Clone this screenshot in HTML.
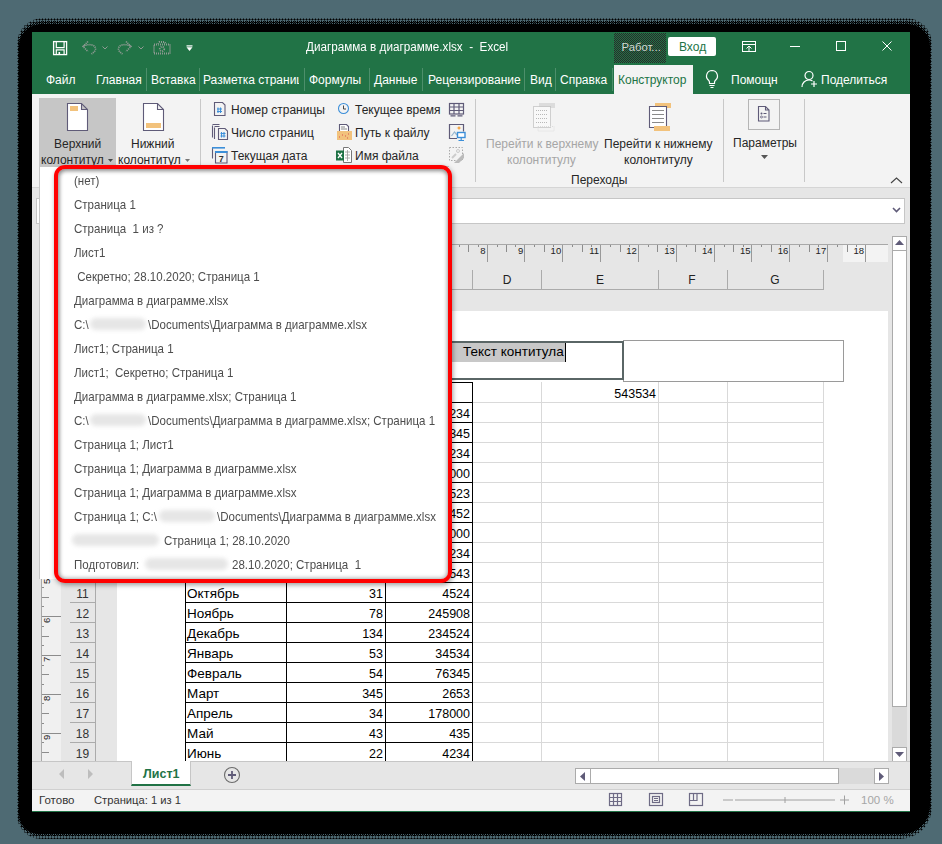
<!DOCTYPE html>
<html><head><meta charset="utf-8">
<style>
*{margin:0;padding:0;box-sizing:border-box}
html,body{width:942px;height:844px;overflow:hidden;background:#4e6a73;font-family:"Liberation Sans",sans-serif;position:relative}
.a{position:absolute}
.t{position:absolute;white-space:pre;line-height:1}
#frame1{left:17px;top:18px;width:915px;height:821px;background:radial-gradient(circle,#000 .9px,transparent 1.1px) 0 0/3px 3px;border-radius:26px 26px 32px 24px}#frame2{left:18px;top:21px;width:913px;height:815px;background:repeating-conic-gradient(#000 0 25%,transparent 0 50%) 0 0/2px 2px;border-radius:24px 24px 30px 22px}#frame{left:19px;top:24px;width:911px;height:810px;background:#000;border-radius:22px 22px 28px 20px}
#win{left:32px;top:32px;width:878px;height:780px;background:#e6e6e6;overflow:hidden}
.tab{position:absolute;top:74px;font-size:12px;color:#fff;white-space:pre;line-height:1}
.sep{position:absolute;top:68px;width:1px;height:23px;background:#4d8f6b}
.rt{position:absolute;font-size:12px;color:#262626;white-space:pre;line-height:1}
.rsep{position:absolute;width:1px;background:#c8c8c8}
</style></head><body>
<div class="a" id="frame1"></div><div class="a" id="frame2"></div><div class="a" id="frame"></div>
<div class="a" id="win"></div>
<!-- TITLE -->
<div class="a" style="left:32px;top:32px;width:878px;height:62px;background:#217346"></div>
<!-- save icon -->
<svg class="a" style="left:52px;top:40px" width="16" height="16" viewBox="0 0 16 16">
 <rect x="1.6" y="1.6" width="13" height="13" stroke="#fff" stroke-width="1.3" fill="none"/>
 <path d="M4.3 1.5V7.6h7.8V1.5" stroke="#fff" stroke-width="1.2" fill="none"/>
 <path d="M4.3 15V9.9h7.8V15" stroke="#fff" stroke-width="1.2" fill="none"/>
 <rect x="6.5" y="12" width="1.6" height="3" fill="#fff"/>
</svg>
<!-- undo/redo disabled -->
<svg class="a" style="left:80px;top:39px" width="120" height="18" viewBox="0 0 120 18">
 <g fill="none" stroke="#8f9a93" stroke-width="1.6" stroke-dasharray="1.2 .8">
  <path d="M8 2.5L3 7.5L8 12.5 M3.5 7 C9 4.5, 15.5 5.5, 15.5 10 C15.5 12, 13.5 13.5, 11.5 15"/>
  <path d="M46 2.5L51 7.5L46 12.5 M50.5 7 C45 4.5, 38.5 5.5, 38.5 10 C38.5 12, 40.5 13.5, 42.5 15"/>
 </g>
 <path d="M22.5 7.5l2.5 2.5 2.5-2.5 M58.5 7.5l2.5 2.5 2.5-2.5" fill="none" stroke="#8f9a93" stroke-width="1"/>
 <g fill="none" stroke="#8f9a93" stroke-width="1.8" stroke-dasharray="1 1">
  <path d="M74 5.5h16v9h-16z M78 5l1.5-2h5l1.5 2"/><circle cx="82" cy="10" r="2.2"/>
 </g>
 <rect x="106.5" y="6.3" width="6" height="1.2" fill="#fff"/>
 <path d="M106.5 8.3h6l-3 3.7z" fill="#fff"/>
</svg>
<div class="t" style="left:306px;top:41px;font-size:12px;color:#fff;transform:scaleX(.975);transform-origin:0 0">Диаграмма в диаграмме.xlsx  -  Excel</div>
<div class="a" style="left:614px;top:33px;width:52px;height:30px;background:repeating-conic-gradient(#2a2a2a 0 25%,#217346 0 50%) 0 0/2px 2px"></div>
<div class="t" style="left:621.5px;top:42px;font-size:11.3px;color:#d0d8d3">Работ...</div>
<div class="a" style="left:668px;top:37px;width:48px;height:19px;background:#fff;border-radius:2px"></div>
<div class="t" style="left:679px;top:41px;font-size:12px;color:#217346">Вход</div>
<!-- window buttons -->
<svg class="a" style="left:740px;top:40px" width="160" height="14" viewBox="0 0 160 14">
 <g fill="none" stroke="#fff" stroke-width="1">
  <rect x="2.5" y="1.5" width="13" height="10"/><path d="M2.5 4.5h13 M9 11V6 M6.5 8.5L9 6l2.5 2.5"/>
  <path d="M50 6.5h10"/>
  <rect x="96.5" y="1.5" width="9" height="9"/>
  <path d="M142.5 1.5l9 9 M151.5 1.5l-9 9"/>
 </g>
</svg>
<!-- TABS -->
<div class="tab" style="left:46px">Файл</div>
<div class="tab" style="left:96px">Главная</div>
<div class="sep" style="left:146px"></div>
<div class="tab" style="left:151px">Вставка</div>
<div class="sep" style="left:199px"></div>
<div class="tab" style="left:203px;width:96px;overflow:hidden">Разметка страниц</div>
<div class="sep" style="left:304px"></div>
<div class="tab" style="left:309px">Формулы</div>
<div class="sep" style="left:369px"></div>
<div class="tab" style="left:374px">Данные</div>
<div class="sep" style="left:422px"></div>
<div class="tab" style="left:428px">Рецензирование</div>
<div class="sep" style="left:524px"></div>
<div class="tab" style="left:530px">Вид</div>
<div class="sep" style="left:555px"></div>
<div class="tab" style="left:560px">Справка</div>
<div class="sep" style="left:612px"></div>
<div class="a" style="left:614px;top:65px;width:79px;height:29px;background:#f3f3f3"></div>
<div class="tab" style="left:618px;color:#217346">Конструктор</div>
<svg class="a" style="left:704px;top:69px" width="16" height="20" viewBox="0 0 16 20">
 <path d="M8 1.5a5.5 5.5 0 0 0-3.5 9.7c.6.6 1 1.3 1 2.3v1h5v-1c0-1 .4-1.7 1-2.3A5.5 5.5 0 0 0 8 1.5z M5.5 16.5h5 M6.5 18.5h3" fill="none" stroke="#fff" stroke-width="1.2"/>
</svg>
<div class="tab" style="left:731px">Помощн</div>
<svg class="a" style="left:801px;top:70px" width="18" height="18" viewBox="0 0 18 18">
 <circle cx="8" cy="5.5" r="4" fill="none" stroke="#fff" stroke-width="1.2"/>
 <path d="M1 17c0-4 3-7 7-7 1.5 0 2.5.4 3.5 1" fill="none" stroke="#fff" stroke-width="1.2"/>
 <path d="M13 11v6 M10 14h6" stroke="#fff" stroke-width="1.2"/>
</svg>
<div class="tab" style="left:821px">Поделиться</div>
<!--RIBBON-->
<div class="a" style="left:32px;top:94px;width:878px;height:94px;background:#f3f3f3;border-bottom:1px solid #d5d5d5"></div>

<!--SHEET-->
<div class="a" style="left:36px;top:198px;width:869px;height:26px;background:#fff;border:1px solid #c6c6c6"></div>
<svg class="a" style="left:892px;top:207px" width="9" height="6"><path d="M1 1l3.5 3.5L8 1" fill="none" stroke="#5f5b78" stroke-width="1.6"/></svg>
<div class="a" style="left:117px;top:244px;width:771px;height:18px;border-top:1px solid #a8a8a8"></div>
<div class="a" style="left:843px;top:245px;width:45px;height:17px;background:#f3f3f3"></div>
<div class="a" style="left:184px;top:245px;width:1px;height:17px;background:#999"></div>
<div class="t" style="left:162.7px;width:20px;text-align:right;top:245.7px;font-size:9.5px;color:#222">0</div>
<div class="a" style="left:165.3px;top:245px;width:1px;height:7px;background:#8c8c8c"></div>
<div class="a" style="left:155.8px;top:245px;width:1px;height:2px;background:#8c8c8c"></div>
<div class="a" style="left:174.7px;top:245px;width:1px;height:2px;background:#8c8c8c"></div>
<div class="a" style="left:222px;top:245px;width:1px;height:17px;background:#999"></div>
<div class="t" style="left:200.6px;width:20px;text-align:right;top:245.7px;font-size:9.5px;color:#222">1</div>
<div class="a" style="left:203.1px;top:245px;width:1px;height:7px;background:#8c8c8c"></div>
<div class="a" style="left:193.7px;top:245px;width:1px;height:2px;background:#8c8c8c"></div>
<div class="a" style="left:212.6px;top:245px;width:1px;height:2px;background:#8c8c8c"></div>
<div class="a" style="left:259px;top:245px;width:1px;height:17px;background:#999"></div>
<div class="t" style="left:238.4px;width:20px;text-align:right;top:245.7px;font-size:9.5px;color:#222">2</div>
<div class="a" style="left:241.0px;top:245px;width:1px;height:7px;background:#8c8c8c"></div>
<div class="a" style="left:231.5px;top:245px;width:1px;height:2px;background:#8c8c8c"></div>
<div class="a" style="left:250.4px;top:245px;width:1px;height:2px;background:#8c8c8c"></div>
<div class="a" style="left:297px;top:245px;width:1px;height:17px;background:#999"></div>
<div class="t" style="left:276.2px;width:20px;text-align:right;top:245.7px;font-size:9.5px;color:#222">3</div>
<div class="a" style="left:278.8px;top:245px;width:1px;height:7px;background:#8c8c8c"></div>
<div class="a" style="left:269.4px;top:245px;width:1px;height:2px;background:#8c8c8c"></div>
<div class="a" style="left:288.3px;top:245px;width:1px;height:2px;background:#8c8c8c"></div>
<div class="a" style="left:335px;top:245px;width:1px;height:17px;background:#999"></div>
<div class="t" style="left:314.1px;width:20px;text-align:right;top:245.7px;font-size:9.5px;color:#222">4</div>
<div class="a" style="left:316.7px;top:245px;width:1px;height:7px;background:#8c8c8c"></div>
<div class="a" style="left:307.2px;top:245px;width:1px;height:2px;background:#8c8c8c"></div>
<div class="a" style="left:326.1px;top:245px;width:1px;height:2px;background:#8c8c8c"></div>
<div class="a" style="left:373px;top:245px;width:1px;height:17px;background:#999"></div>
<div class="t" style="left:351.9px;width:20px;text-align:right;top:245.7px;font-size:9.5px;color:#222">5</div>
<div class="a" style="left:354.5px;top:245px;width:1px;height:7px;background:#8c8c8c"></div>
<div class="a" style="left:345.1px;top:245px;width:1px;height:2px;background:#8c8c8c"></div>
<div class="a" style="left:364.0px;top:245px;width:1px;height:2px;background:#8c8c8c"></div>
<div class="a" style="left:411px;top:245px;width:1px;height:17px;background:#999"></div>
<div class="t" style="left:389.8px;width:20px;text-align:right;top:245.7px;font-size:9.5px;color:#222">6</div>
<div class="a" style="left:392.4px;top:245px;width:1px;height:7px;background:#8c8c8c"></div>
<div class="a" style="left:382.9px;top:245px;width:1px;height:2px;background:#8c8c8c"></div>
<div class="a" style="left:401.8px;top:245px;width:1px;height:2px;background:#8c8c8c"></div>
<div class="a" style="left:449px;top:245px;width:1px;height:17px;background:#999"></div>
<div class="t" style="left:427.6px;width:20px;text-align:right;top:245.7px;font-size:9.5px;color:#222">7</div>
<div class="a" style="left:430.2px;top:245px;width:1px;height:7px;background:#8c8c8c"></div>
<div class="a" style="left:420.8px;top:245px;width:1px;height:2px;background:#8c8c8c"></div>
<div class="a" style="left:439.7px;top:245px;width:1px;height:2px;background:#8c8c8c"></div>
<div class="a" style="left:487px;top:245px;width:1px;height:17px;background:#999"></div>
<div class="t" style="left:465.5px;width:20px;text-align:right;top:245.7px;font-size:9.5px;color:#222">8</div>
<div class="a" style="left:468.1px;top:245px;width:1px;height:7px;background:#8c8c8c"></div>
<div class="a" style="left:458.6px;top:245px;width:1px;height:2px;background:#8c8c8c"></div>
<div class="a" style="left:477.5px;top:245px;width:1px;height:2px;background:#8c8c8c"></div>
<div class="a" style="left:524px;top:245px;width:1px;height:17px;background:#999"></div>
<div class="t" style="left:503.4px;width:20px;text-align:right;top:245.7px;font-size:9.5px;color:#222">9</div>
<div class="a" style="left:505.9px;top:245px;width:1px;height:7px;background:#8c8c8c"></div>
<div class="a" style="left:496.5px;top:245px;width:1px;height:2px;background:#8c8c8c"></div>
<div class="a" style="left:515.4px;top:245px;width:1px;height:2px;background:#8c8c8c"></div>
<div class="a" style="left:562px;top:245px;width:1px;height:17px;background:#999"></div>
<div class="t" style="left:541.2px;width:20px;text-align:right;top:245.7px;font-size:9.5px;color:#222">10</div>
<div class="a" style="left:543.8px;top:245px;width:1px;height:7px;background:#8c8c8c"></div>
<div class="a" style="left:534.3px;top:245px;width:1px;height:2px;background:#8c8c8c"></div>
<div class="a" style="left:553.2px;top:245px;width:1px;height:2px;background:#8c8c8c"></div>
<div class="a" style="left:600px;top:245px;width:1px;height:17px;background:#999"></div>
<div class="t" style="left:579.0px;width:20px;text-align:right;top:245.7px;font-size:9.5px;color:#222">11</div>
<div class="a" style="left:581.6px;top:245px;width:1px;height:7px;background:#8c8c8c"></div>
<div class="a" style="left:572.2px;top:245px;width:1px;height:2px;background:#8c8c8c"></div>
<div class="a" style="left:591.1px;top:245px;width:1px;height:2px;background:#8c8c8c"></div>
<div class="a" style="left:638px;top:245px;width:1px;height:17px;background:#999"></div>
<div class="t" style="left:616.9px;width:20px;text-align:right;top:245.7px;font-size:9.5px;color:#222">12</div>
<div class="a" style="left:619.5px;top:245px;width:1px;height:7px;background:#8c8c8c"></div>
<div class="a" style="left:610.0px;top:245px;width:1px;height:2px;background:#8c8c8c"></div>
<div class="a" style="left:628.9px;top:245px;width:1px;height:2px;background:#8c8c8c"></div>
<div class="a" style="left:676px;top:245px;width:1px;height:17px;background:#999"></div>
<div class="t" style="left:654.8px;width:20px;text-align:right;top:245.7px;font-size:9.5px;color:#222">13</div>
<div class="a" style="left:657.3px;top:245px;width:1px;height:7px;background:#8c8c8c"></div>
<div class="a" style="left:647.9px;top:245px;width:1px;height:2px;background:#8c8c8c"></div>
<div class="a" style="left:666.8px;top:245px;width:1px;height:2px;background:#8c8c8c"></div>
<div class="a" style="left:714px;top:245px;width:1px;height:17px;background:#999"></div>
<div class="t" style="left:692.6px;width:20px;text-align:right;top:245.7px;font-size:9.5px;color:#222">14</div>
<div class="a" style="left:695.2px;top:245px;width:1px;height:7px;background:#8c8c8c"></div>
<div class="a" style="left:685.7px;top:245px;width:1px;height:2px;background:#8c8c8c"></div>
<div class="a" style="left:704.6px;top:245px;width:1px;height:2px;background:#8c8c8c"></div>
<div class="a" style="left:751px;top:245px;width:1px;height:17px;background:#999"></div>
<div class="t" style="left:730.5px;width:20px;text-align:right;top:245.7px;font-size:9.5px;color:#222">15</div>
<div class="a" style="left:733.0px;top:245px;width:1px;height:7px;background:#8c8c8c"></div>
<div class="a" style="left:723.6px;top:245px;width:1px;height:2px;background:#8c8c8c"></div>
<div class="a" style="left:742.5px;top:245px;width:1px;height:2px;background:#8c8c8c"></div>
<div class="a" style="left:789px;top:245px;width:1px;height:17px;background:#999"></div>
<div class="t" style="left:768.3px;width:20px;text-align:right;top:245.7px;font-size:9.5px;color:#222">16</div>
<div class="a" style="left:770.9px;top:245px;width:1px;height:7px;background:#8c8c8c"></div>
<div class="a" style="left:761.4px;top:245px;width:1px;height:2px;background:#8c8c8c"></div>
<div class="a" style="left:780.3px;top:245px;width:1px;height:2px;background:#8c8c8c"></div>
<div class="a" style="left:827px;top:245px;width:1px;height:17px;background:#999"></div>
<div class="t" style="left:806.2px;width:20px;text-align:right;top:245.7px;font-size:9.5px;color:#222">17</div>
<div class="a" style="left:808.7px;top:245px;width:1px;height:7px;background:#8c8c8c"></div>
<div class="a" style="left:799.3px;top:245px;width:1px;height:2px;background:#8c8c8c"></div>
<div class="a" style="left:818.2px;top:245px;width:1px;height:2px;background:#8c8c8c"></div>
<div class="a" style="left:865px;top:245px;width:1px;height:17px;background:#999"></div>
<div class="t" style="left:844.0px;width:20px;text-align:right;top:245.7px;font-size:9.5px;color:#222">18</div>
<div class="a" style="left:846.6px;top:245px;width:1px;height:7px;background:#8c8c8c"></div>
<div class="a" style="left:837.1px;top:245px;width:1px;height:2px;background:#8c8c8c"></div>
<div class="a" style="left:856.0px;top:245px;width:1px;height:2px;background:#8c8c8c"></div>
<div class="a" style="left:96px;top:289px;width:728px;height:1px;background:#ababab"></div>
<div class="a" style="left:185px;top:270px;width:1px;height:20px;background:#ababab"></div>
<div class="a" style="left:286px;top:270px;width:1px;height:20px;background:#ababab"></div>
<div class="a" style="left:385px;top:270px;width:1px;height:20px;background:#ababab"></div>
<div class="a" style="left:472px;top:270px;width:1px;height:20px;background:#ababab"></div>
<div class="a" style="left:541px;top:270px;width:1px;height:20px;background:#ababab"></div>
<div class="a" style="left:658px;top:270px;width:1px;height:20px;background:#ababab"></div>
<div class="a" style="left:727px;top:270px;width:1px;height:20px;background:#ababab"></div>
<div class="a" style="left:823px;top:270px;width:1px;height:20px;background:#ababab"></div>
<div class="t" style="left:215px;width:40px;text-align:center;top:274px;font-size:12px;color:#222">A</div>
<div class="t" style="left:315px;width:40px;text-align:center;top:274px;font-size:12px;color:#222">B</div>
<div class="t" style="left:408px;width:40px;text-align:center;top:274px;font-size:12px;color:#222">C</div>
<div class="t" style="left:487px;width:40px;text-align:center;top:274px;font-size:12px;color:#222">D</div>
<div class="t" style="left:580px;width:40px;text-align:center;top:274px;font-size:12px;color:#222">E</div>
<div class="t" style="left:672px;width:40px;text-align:center;top:274px;font-size:12px;color:#222">F</div>
<div class="t" style="left:755px;width:40px;text-align:center;top:274px;font-size:12px;color:#222">G</div>
<div class="a" style="left:41px;top:310px;width:20px;height:451px;background:#f0f0f0;border-left:1px solid #a8a8a8"></div>
<div class="a" style="left:42px;top:383.3px;width:19px;height:1px;background:#8c8c8c"></div>
<div class="t" style="left:41.8px;top:390.3px;font-size:9.5px;color:#222;transform:rotate(-90deg);transform-origin:0 0">0</div>
<div class="a" style="left:42px;top:363.9px;width:7px;height:1px;background:#8c8c8c"></div>
<div class="a" style="left:42px;top:354.2px;width:2px;height:1px;background:#8c8c8c"></div>
<div class="a" style="left:42px;top:373.6px;width:2px;height:1px;background:#8c8c8c"></div>
<div class="a" style="left:42px;top:422.1px;width:19px;height:1px;background:#8c8c8c"></div>
<div class="t" style="left:41.8px;top:429.1px;font-size:9.5px;color:#222;transform:rotate(-90deg);transform-origin:0 0">1</div>
<div class="a" style="left:42px;top:402.7px;width:7px;height:1px;background:#8c8c8c"></div>
<div class="a" style="left:42px;top:393.0px;width:2px;height:1px;background:#8c8c8c"></div>
<div class="a" style="left:42px;top:412.4px;width:2px;height:1px;background:#8c8c8c"></div>
<div class="a" style="left:42px;top:460.9px;width:19px;height:1px;background:#8c8c8c"></div>
<div class="t" style="left:41.8px;top:467.9px;font-size:9.5px;color:#222;transform:rotate(-90deg);transform-origin:0 0">2</div>
<div class="a" style="left:42px;top:441.5px;width:7px;height:1px;background:#8c8c8c"></div>
<div class="a" style="left:42px;top:431.8px;width:2px;height:1px;background:#8c8c8c"></div>
<div class="a" style="left:42px;top:451.2px;width:2px;height:1px;background:#8c8c8c"></div>
<div class="a" style="left:42px;top:499.7px;width:19px;height:1px;background:#8c8c8c"></div>
<div class="t" style="left:41.8px;top:506.7px;font-size:9.5px;color:#222;transform:rotate(-90deg);transform-origin:0 0">3</div>
<div class="a" style="left:42px;top:480.3px;width:7px;height:1px;background:#8c8c8c"></div>
<div class="a" style="left:42px;top:470.6px;width:2px;height:1px;background:#8c8c8c"></div>
<div class="a" style="left:42px;top:490.0px;width:2px;height:1px;background:#8c8c8c"></div>
<div class="a" style="left:42px;top:538.5px;width:19px;height:1px;background:#8c8c8c"></div>
<div class="t" style="left:41.8px;top:545.5px;font-size:9.5px;color:#222;transform:rotate(-90deg);transform-origin:0 0">4</div>
<div class="a" style="left:42px;top:519.1px;width:7px;height:1px;background:#8c8c8c"></div>
<div class="a" style="left:42px;top:509.4px;width:2px;height:1px;background:#8c8c8c"></div>
<div class="a" style="left:42px;top:528.8px;width:2px;height:1px;background:#8c8c8c"></div>
<div class="a" style="left:42px;top:577.3px;width:19px;height:1px;background:#8c8c8c"></div>
<div class="t" style="left:41.8px;top:584.3px;font-size:9.5px;color:#222;transform:rotate(-90deg);transform-origin:0 0">5</div>
<div class="a" style="left:42px;top:557.9px;width:7px;height:1px;background:#8c8c8c"></div>
<div class="a" style="left:42px;top:548.2px;width:2px;height:1px;background:#8c8c8c"></div>
<div class="a" style="left:42px;top:567.6px;width:2px;height:1px;background:#8c8c8c"></div>
<div class="a" style="left:42px;top:616.1px;width:19px;height:1px;background:#8c8c8c"></div>
<div class="t" style="left:41.8px;top:623.1px;font-size:9.5px;color:#222;transform:rotate(-90deg);transform-origin:0 0">6</div>
<div class="a" style="left:42px;top:596.7px;width:7px;height:1px;background:#8c8c8c"></div>
<div class="a" style="left:42px;top:587.0px;width:2px;height:1px;background:#8c8c8c"></div>
<div class="a" style="left:42px;top:606.4px;width:2px;height:1px;background:#8c8c8c"></div>
<div class="a" style="left:42px;top:654.9px;width:19px;height:1px;background:#8c8c8c"></div>
<div class="t" style="left:41.8px;top:661.9px;font-size:9.5px;color:#222;transform:rotate(-90deg);transform-origin:0 0">7</div>
<div class="a" style="left:42px;top:635.5px;width:7px;height:1px;background:#8c8c8c"></div>
<div class="a" style="left:42px;top:625.8px;width:2px;height:1px;background:#8c8c8c"></div>
<div class="a" style="left:42px;top:645.2px;width:2px;height:1px;background:#8c8c8c"></div>
<div class="a" style="left:42px;top:693.7px;width:19px;height:1px;background:#8c8c8c"></div>
<div class="t" style="left:41.8px;top:700.7px;font-size:9.5px;color:#222;transform:rotate(-90deg);transform-origin:0 0">8</div>
<div class="a" style="left:42px;top:674.3px;width:7px;height:1px;background:#8c8c8c"></div>
<div class="a" style="left:42px;top:664.6px;width:2px;height:1px;background:#8c8c8c"></div>
<div class="a" style="left:42px;top:684.0px;width:2px;height:1px;background:#8c8c8c"></div>
<div class="a" style="left:42px;top:732.5px;width:19px;height:1px;background:#8c8c8c"></div>
<div class="t" style="left:41.8px;top:739.5px;font-size:9.5px;color:#222;transform:rotate(-90deg);transform-origin:0 0">9</div>
<div class="a" style="left:42px;top:713.1px;width:7px;height:1px;background:#8c8c8c"></div>
<div class="a" style="left:42px;top:703.4px;width:2px;height:1px;background:#8c8c8c"></div>
<div class="a" style="left:42px;top:722.8px;width:2px;height:1px;background:#8c8c8c"></div>
<div class="a" style="left:42px;top:751.9px;width:7px;height:1px;background:#8c8c8c"></div>
<div class="a" style="left:42px;top:742.2px;width:2px;height:1px;background:#8c8c8c"></div>
<div class="a" style="left:95px;top:310px;width:1px;height:451px;background:#ababab"></div>
<div class="a" style="left:70px;top:402px;width:25px;height:1px;background:#ababab"></div>
<div class="t" style="left:62.5px;width:40px;text-align:center;top:388px;font-size:12px;color:#333">1</div>
<div class="a" style="left:70px;top:422px;width:25px;height:1px;background:#ababab"></div>
<div class="t" style="left:62.5px;width:40px;text-align:center;top:408px;font-size:12px;color:#333">2</div>
<div class="a" style="left:70px;top:442px;width:25px;height:1px;background:#ababab"></div>
<div class="t" style="left:62.5px;width:40px;text-align:center;top:428px;font-size:12px;color:#333">3</div>
<div class="a" style="left:70px;top:462px;width:25px;height:1px;background:#ababab"></div>
<div class="t" style="left:62.5px;width:40px;text-align:center;top:448px;font-size:12px;color:#333">4</div>
<div class="a" style="left:70px;top:482px;width:25px;height:1px;background:#ababab"></div>
<div class="t" style="left:62.5px;width:40px;text-align:center;top:468px;font-size:12px;color:#333">5</div>
<div class="a" style="left:70px;top:502px;width:25px;height:1px;background:#ababab"></div>
<div class="t" style="left:62.5px;width:40px;text-align:center;top:488px;font-size:12px;color:#333">6</div>
<div class="a" style="left:70px;top:522px;width:25px;height:1px;background:#ababab"></div>
<div class="t" style="left:62.5px;width:40px;text-align:center;top:508px;font-size:12px;color:#333">7</div>
<div class="a" style="left:70px;top:542px;width:25px;height:1px;background:#ababab"></div>
<div class="t" style="left:62.5px;width:40px;text-align:center;top:528px;font-size:12px;color:#333">8</div>
<div class="a" style="left:70px;top:562px;width:25px;height:1px;background:#ababab"></div>
<div class="t" style="left:62.5px;width:40px;text-align:center;top:548px;font-size:12px;color:#333">9</div>
<div class="a" style="left:70px;top:582px;width:25px;height:1px;background:#ababab"></div>
<div class="t" style="left:62.5px;width:40px;text-align:center;top:568px;font-size:12px;color:#333">10</div>
<div class="a" style="left:70px;top:602px;width:25px;height:1px;background:#ababab"></div>
<div class="t" style="left:62.5px;width:40px;text-align:center;top:588px;font-size:12px;color:#333">11</div>
<div class="a" style="left:70px;top:622px;width:25px;height:1px;background:#ababab"></div>
<div class="t" style="left:62.5px;width:40px;text-align:center;top:608px;font-size:12px;color:#333">12</div>
<div class="a" style="left:70px;top:642px;width:25px;height:1px;background:#ababab"></div>
<div class="t" style="left:62.5px;width:40px;text-align:center;top:628px;font-size:12px;color:#333">13</div>
<div class="a" style="left:70px;top:662px;width:25px;height:1px;background:#ababab"></div>
<div class="t" style="left:62.5px;width:40px;text-align:center;top:648px;font-size:12px;color:#333">14</div>
<div class="a" style="left:70px;top:682px;width:25px;height:1px;background:#ababab"></div>
<div class="t" style="left:62.5px;width:40px;text-align:center;top:668px;font-size:12px;color:#333">15</div>
<div class="a" style="left:70px;top:702px;width:25px;height:1px;background:#ababab"></div>
<div class="t" style="left:62.5px;width:40px;text-align:center;top:688px;font-size:12px;color:#333">16</div>
<div class="a" style="left:70px;top:722px;width:25px;height:1px;background:#ababab"></div>
<div class="t" style="left:62.5px;width:40px;text-align:center;top:708px;font-size:12px;color:#333">17</div>
<div class="a" style="left:70px;top:742px;width:25px;height:1px;background:#ababab"></div>
<div class="t" style="left:62.5px;width:40px;text-align:center;top:728px;font-size:12px;color:#333">18</div>
<div class="a" style="left:70px;top:762px;width:25px;height:1px;background:#ababab"></div>
<div class="t" style="left:62.5px;width:40px;text-align:center;top:748px;font-size:12px;color:#333">19</div>
<div class="a" style="left:117px;top:311px;width:771px;height:450px;background:#fff"></div>
<div class="a" style="left:623px;top:340px;width:221px;height:42px;border:1px solid #9a9a9a"></div>
<div class="a" style="left:403px;top:341px;width:221px;height:39px;border:2px solid #5a6666"></div>
<div class="a" style="left:452px;top:343px;width:113px;height:19px;background:#c8c8c8"></div>
<div class="a" style="left:565px;top:343px;width:1px;height:19px;background:#000"></div>
<div class="t" style="left:463px;top:345px;font-size:13.5px;color:#000">Текст контитула</div>
<div class="a" style="left:541px;top:382px;width:1px;height:379px;background:#d9d9d9"></div>
<div class="a" style="left:658px;top:382px;width:1px;height:379px;background:#d9d9d9"></div>
<div class="a" style="left:727px;top:382px;width:1px;height:379px;background:#d9d9d9"></div>
<div class="a" style="left:823px;top:382px;width:1px;height:379px;background:#d9d9d9"></div>
<div class="a" style="left:473px;top:402px;width:351px;height:1px;background:#d9d9d9"></div>
<div class="a" style="left:473px;top:422px;width:351px;height:1px;background:#d9d9d9"></div>
<div class="a" style="left:473px;top:442px;width:351px;height:1px;background:#d9d9d9"></div>
<div class="a" style="left:473px;top:462px;width:351px;height:1px;background:#d9d9d9"></div>
<div class="a" style="left:473px;top:482px;width:351px;height:1px;background:#d9d9d9"></div>
<div class="a" style="left:473px;top:502px;width:351px;height:1px;background:#d9d9d9"></div>
<div class="a" style="left:473px;top:522px;width:351px;height:1px;background:#d9d9d9"></div>
<div class="a" style="left:473px;top:542px;width:351px;height:1px;background:#d9d9d9"></div>
<div class="a" style="left:473px;top:562px;width:351px;height:1px;background:#d9d9d9"></div>
<div class="a" style="left:473px;top:582px;width:351px;height:1px;background:#d9d9d9"></div>
<div class="a" style="left:473px;top:602px;width:351px;height:1px;background:#d9d9d9"></div>
<div class="a" style="left:473px;top:622px;width:351px;height:1px;background:#d9d9d9"></div>
<div class="a" style="left:473px;top:642px;width:351px;height:1px;background:#d9d9d9"></div>
<div class="a" style="left:473px;top:662px;width:351px;height:1px;background:#d9d9d9"></div>
<div class="a" style="left:473px;top:682px;width:351px;height:1px;background:#d9d9d9"></div>
<div class="a" style="left:473px;top:702px;width:351px;height:1px;background:#d9d9d9"></div>
<div class="a" style="left:473px;top:722px;width:351px;height:1px;background:#d9d9d9"></div>
<div class="a" style="left:473px;top:742px;width:351px;height:1px;background:#d9d9d9"></div>
<div class="a" style="left:185px;top:382px;width:1px;height:379px;background:#000"></div>
<div class="a" style="left:286px;top:382px;width:1px;height:379px;background:#000"></div>
<div class="a" style="left:385px;top:382px;width:1px;height:379px;background:#000"></div>
<div class="a" style="left:472px;top:382px;width:1px;height:379px;background:#000"></div>
<div class="a" style="left:185px;top:382px;width:288px;height:1px;background:#000"></div>
<div class="a" style="left:185px;top:402px;width:288px;height:1px;background:#000"></div>
<div class="a" style="left:185px;top:422px;width:288px;height:1px;background:#000"></div>
<div class="a" style="left:185px;top:442px;width:288px;height:1px;background:#000"></div>
<div class="a" style="left:185px;top:462px;width:288px;height:1px;background:#000"></div>
<div class="a" style="left:185px;top:482px;width:288px;height:1px;background:#000"></div>
<div class="a" style="left:185px;top:502px;width:288px;height:1px;background:#000"></div>
<div class="a" style="left:185px;top:522px;width:288px;height:1px;background:#000"></div>
<div class="a" style="left:185px;top:542px;width:288px;height:1px;background:#000"></div>
<div class="a" style="left:185px;top:562px;width:288px;height:1px;background:#000"></div>
<div class="a" style="left:185px;top:582px;width:288px;height:1px;background:#000"></div>
<div class="a" style="left:185px;top:602px;width:288px;height:1px;background:#000"></div>
<div class="a" style="left:185px;top:622px;width:288px;height:1px;background:#000"></div>
<div class="a" style="left:185px;top:642px;width:288px;height:1px;background:#000"></div>
<div class="a" style="left:185px;top:662px;width:288px;height:1px;background:#000"></div>
<div class="a" style="left:185px;top:682px;width:288px;height:1px;background:#000"></div>
<div class="a" style="left:185px;top:702px;width:288px;height:1px;background:#000"></div>
<div class="a" style="left:185px;top:722px;width:288px;height:1px;background:#000"></div>
<div class="a" style="left:185px;top:742px;width:288px;height:1px;background:#000"></div>
<div class="t" style="left:385px;width:85px;text-align:right;top:408px;font-size:12.5px;color:#000">1234</div>
<div class="t" style="left:385px;width:85px;text-align:right;top:428px;font-size:12.5px;color:#000">2345</div>
<div class="t" style="left:385px;width:85px;text-align:right;top:448px;font-size:12.5px;color:#000">1234</div>
<div class="t" style="left:385px;width:85px;text-align:right;top:468px;font-size:12.5px;color:#000">178000</div>
<div class="t" style="left:385px;width:85px;text-align:right;top:488px;font-size:12.5px;color:#000">2523</div>
<div class="t" style="left:385px;width:85px;text-align:right;top:508px;font-size:12.5px;color:#000">3452</div>
<div class="t" style="left:385px;width:85px;text-align:right;top:528px;font-size:12.5px;color:#000">178000</div>
<div class="t" style="left:385px;width:85px;text-align:right;top:548px;font-size:12.5px;color:#000">4234</div>
<div class="t" style="left:385px;width:85px;text-align:right;top:568px;font-size:12.5px;color:#000">2543</div>
<div class="t" style="left:187px;top:587px;font-size:13.5px;color:#000">Октябрь</div>
<div class="t" style="left:286px;width:97px;text-align:right;top:588px;font-size:12.5px;color:#000">31</div>
<div class="t" style="left:385px;width:85px;text-align:right;top:588px;font-size:12.5px;color:#000">4524</div>
<div class="t" style="left:187px;top:607px;font-size:13.5px;color:#000">Ноябрь</div>
<div class="t" style="left:286px;width:97px;text-align:right;top:608px;font-size:12.5px;color:#000">78</div>
<div class="t" style="left:385px;width:85px;text-align:right;top:608px;font-size:12.5px;color:#000">245908</div>
<div class="t" style="left:187px;top:627px;font-size:13.5px;color:#000">Декабрь</div>
<div class="t" style="left:286px;width:97px;text-align:right;top:628px;font-size:12.5px;color:#000">134</div>
<div class="t" style="left:385px;width:85px;text-align:right;top:628px;font-size:12.5px;color:#000">234524</div>
<div class="t" style="left:187px;top:647px;font-size:13.5px;color:#000">Январь</div>
<div class="t" style="left:286px;width:97px;text-align:right;top:648px;font-size:12.5px;color:#000">53</div>
<div class="t" style="left:385px;width:85px;text-align:right;top:648px;font-size:12.5px;color:#000">34534</div>
<div class="t" style="left:187px;top:667px;font-size:13.5px;color:#000">Февраль</div>
<div class="t" style="left:286px;width:97px;text-align:right;top:668px;font-size:12.5px;color:#000">54</div>
<div class="t" style="left:385px;width:85px;text-align:right;top:668px;font-size:12.5px;color:#000">76345</div>
<div class="t" style="left:187px;top:687px;font-size:13.5px;color:#000">Март</div>
<div class="t" style="left:286px;width:97px;text-align:right;top:688px;font-size:12.5px;color:#000">345</div>
<div class="t" style="left:385px;width:85px;text-align:right;top:688px;font-size:12.5px;color:#000">2653</div>
<div class="t" style="left:187px;top:707px;font-size:13.5px;color:#000">Апрель</div>
<div class="t" style="left:286px;width:97px;text-align:right;top:708px;font-size:12.5px;color:#000">34</div>
<div class="t" style="left:385px;width:85px;text-align:right;top:708px;font-size:12.5px;color:#000">178000</div>
<div class="t" style="left:187px;top:727px;font-size:13.5px;color:#000">Май</div>
<div class="t" style="left:286px;width:97px;text-align:right;top:728px;font-size:12.5px;color:#000">43</div>
<div class="t" style="left:385px;width:85px;text-align:right;top:728px;font-size:12.5px;color:#000">435</div>
<div class="t" style="left:187px;top:747px;font-size:13.5px;color:#000">Июнь</div>
<div class="t" style="left:286px;width:97px;text-align:right;top:748px;font-size:12.5px;color:#000">22</div>
<div class="t" style="left:385px;width:85px;text-align:right;top:748px;font-size:12.5px;color:#000">4234</div>
<div class="t" style="left:541px;width:115px;text-align:right;top:388px;font-size:12.5px;color:#000">543534</div>
<div class="a" style="left:892px;top:236px;width:15px;height:15px;background:#fff;border:1px solid #ababab"></div>
<div class="a" style="left:892px;top:250px;width:15px;height:457px;background:#fff;border:1px solid #ababab"></div>
<div class="a" style="left:892px;top:707px;width:15px;height:40px;background:#dadada"></div>
<div class="a" style="left:892px;top:747px;width:15px;height:15px;background:#fff;border:1px solid #ababab"></div>
<svg class="a" style="left:895px;top:240px" width="9" height="6"><path d="M0 5h9L4.5 0z" fill="#5f5b78"/></svg>
<svg class="a" style="left:895px;top:752px" width="9" height="6"><path d="M0 0h9L4.5 5z" fill="#5f5b78"/></svg>
<div class="a" style="left:32px;top:761px;width:878px;height:28px;background:#e6e6e6;border-top:1px solid #c6c6c6"></div>
<svg class="a" style="left:57px;top:769px" width="40" height="10"><path d="M7 0v10L2 5z M31 0v10l5-5z" fill="#bdbdbd"/></svg>
<div class="a" style="left:131px;top:761px;width:60px;height:25px;background:#fff;border-left:1px solid #c6c6c6;border-right:1px solid #c6c6c6;border-bottom:2px solid #217346"></div>
<div class="t" style="left:143px;top:768px;font-size:12.5px;font-weight:bold;color:#217346">Лист1</div>
<svg class="a" style="left:223px;top:766px" width="18" height="18"><circle cx="9" cy="9" r="7.5" fill="none" stroke="#6b6b6b" stroke-width="1.1"/><path d="M9 5v8 M5 9h8" stroke="#5f5b78" stroke-width="1.8"/></svg>
<div class="a" style="left:838px;top:768px;width:37px;height:16px;background:#dadada"></div>
<div class="a" style="left:575px;top:768px;width:16px;height:16px;background:#fff;border:1px solid #ababab"></div>
<div class="a" style="left:590px;top:768px;width:249px;height:16px;background:#fff;border:1px solid #ababab"></div>
<div class="a" style="left:874px;top:768px;width:15px;height:16px;background:#fff;border:1px solid #ababab"></div>
<svg class="a" style="left:580px;top:772px" width="6" height="9"><path d="M5 0v9L0 4.5z" fill="#5f5b78"/></svg>
<svg class="a" style="left:879px;top:772px" width="6" height="9"><path d="M0 0v9l5-4.5z" fill="#5f5b78"/></svg>
<div class="a" style="left:32px;top:789px;width:878px;height:23px;background:#f3f3f3;border-top:1px solid #d0d0d0;border-bottom:1px solid #217346"></div>
<div class="t" style="left:39px;top:795px;font-size:11.5px;color:#333">Готово</div>
<div class="t" style="left:94px;top:795px;font-size:11.2px;color:#333">Страница: 1 из 1</div>
<svg class="a" style="left:600px;top:790px" width="300" height="20" viewBox="0 0 300 20">
 <g fill="none" stroke="#6e6b85" stroke-width="1.2">
  <rect x="9.5" y="3.5" width="12" height="12"/><path d="M13.5 3.5v12 M17.5 3.5v12 M9.5 7.5h12 M9.5 11.5h12"/>
  <rect x="49.5" y="3.5" width="13" height="12"/><rect x="52.5" y="6.5" width="7" height="6"/><path d="M54 8.5h4 M54 10.5h4"/>
  <rect x="89.5" y="3.5" width="13" height="12"/><path d="M89.5 10.5h7.5v-7 M93.5 3.5v7"/>
 </g>
 <path d="M123 10h10 M135 10h100 M185 7v6 M240 10h9 M244.5 5.5v9" stroke="#a0a0a0" stroke-width="1"/>
</svg>
<div class="t" style="left:861px;top:795px;font-size:11.5px;color:#a6a6a6">100 %</div>
<!--SHEET_END-->
<!-- pressed header button -->
<div class="a" style="left:39px;top:98px;width:77px;height:70px;background:#c6c6c6"></div>
<svg class="a" style="left:66px;top:102px" width="24" height="30" viewBox="0 0 24 30">
 <path d="M1.5 1.5h14l6 6v21h-20z M15.5 1.5v6h6" fill="#fff" stroke="#5f5b78" stroke-width="1.1"/>
 <rect x="4" y="4" width="8" height="5" fill="#f2c27c"/>
</svg>
<div class="rt" style="left:54px;top:138px">Верхний</div>
<div class="rt" style="left:41px;top:154px">колонтитул</div>
<svg class="a" style="left:108px;top:159px" width="5" height="3"><path d="M0 0h5L2.5 3z" fill="#444"/></svg>
<svg class="a" style="left:142px;top:102px" width="24" height="30" viewBox="0 0 24 30">
 <path d="M1.5 1.5h14l6 6v21h-20z M15.5 1.5v6h6" fill="#fff" stroke="#5f5b78" stroke-width="1.1"/>
 <rect x="4" y="21" width="15" height="5" fill="#f2c27c"/>
</svg>
<div class="rt" style="left:131px;top:138px">Нижний</div>
<div class="rt" style="left:118px;top:154px">колонтитул</div>
<svg class="a" style="left:185px;top:159px" width="5" height="3"><path d="M0 0h5L2.5 3z" fill="#777"/></svg>
<div class="rsep" style="left:200px;top:99px;height:83px"></div>
<!-- col 1 icons -->
<svg class="a" style="left:211px;top:101px" width="20" height="64" viewBox="0 0 20 64">
 <g fill="none" stroke="#5f5b78" stroke-width="1.1">
  <path d="M3.5 1.5h8l2.5 2.5v10.5h-10.5z"/>
  <path d="M1.5 24.5v12 M1.5 23.5h7 M3.5 26.5v11.5 M3.5 25.5h5"/>
  <path d="M7.5 27.5h6.5l2.5 2.5v8.5h-9z"/>
  <path d="M1.5 47v10.5"/>
  <path d="M4.5 50.5h11.5v11.5h-11.5z"/>
 </g>
 <g stroke="#3c8fd9" stroke-width="1.1" fill="none">
  <path d="M7 6.5v5.5 M9.5 6.5v5.5 M6 8h5 M6 10.5h5"/>
  <path d="M10.5 31v5.5 M13 31v5.5 M9.5 32.5h5 M9.5 35h5"/>
 </g>
 <rect x="4" y="50" width="12.5" height="2" fill="#3c8fd9"/><rect x="1" y="46" width="13" height="1.6" fill="#3c8fd9"/>
 <text x="10.3" y="61" font-size="9" font-family="Liberation Sans" font-weight="bold" fill="#333" text-anchor="middle">7</text>
</svg>
<div class="rt" style="left:231px;top:104px">Номер страницы</div>
<div class="rt" style="left:231px;top:127px">Число страниц</div>
<div class="rt" style="left:231px;top:150px">Текущая дата</div>
<!-- col 2 icons -->
<svg class="a" style="left:335px;top:101px" width="20" height="64" viewBox="0 0 20 64">
 <circle cx="8.5" cy="7.5" r="5" fill="none" stroke="#3c8fd9" stroke-width="1.1"/>
 <path d="M8.5 4.5v3.5h2.5" fill="none" stroke="#444" stroke-width="1"/>
 <path d="M4.5 31v-7.5h7l2 2v5.5" fill="#fff" stroke="#5f5b78" stroke-width="1.1"/>
 <path d="M6 26h4 M6 28h6" stroke="#888" stroke-width="1"/>
 <path d="M2 30h15v9h-15z" fill="#f2c27c"/>
 <path d="M4 36h1 M7 34h1 M10 35h1 M13 33h1 M12 37h1" stroke="#d9534f" stroke-width="1"/>
 <path d="M8.5 46.5h5l3 3v12h-8z" fill="#fff" stroke="#777" stroke-width="1"/>
 <path d="M10 51h5 M10 54h5 M10 57h5 M12.5 49v11" stroke="#999" stroke-width=".8"/>
 <rect x="1" y="49.5" width="8" height="10" fill="#1e7145"/>
 <path d="M3 52l4 5 M7 52l-4 5" stroke="#fff" stroke-width="1.3"/>
</svg>
<div class="rt" style="left:355px;top:104px">Текущее время</div>
<div class="rt" style="left:355px;top:127px">Путь к файлу</div>
<div class="rt" style="left:355px;top:150px">Имя файла</div>
<!-- col 3 icons -->
<svg class="a" style="left:448px;top:101px" width="20" height="64" viewBox="0 0 20 64">
 <g fill="none" stroke="#5f5b78" stroke-width="1.2">
  <rect x="1.5" y="2.5" width="14" height="10.5"/>
  <path d="M1.5 6h14 M1.5 9.5h14 M6 2.5v10.5 M11 2.5v10.5 M2.5 14.8h5 M9.5 14.8h5"/>
  <path d="M9 37.5h-7.5v-14h14v7"/>
 </g>
 <path d="M11 25l1 1.5 1.5.5-1.5.5-1 1.5-1-1.5-1.5-.5 1.5-.5z" fill="#f2a13c"/>
 <path d="M3.5 35l3-4 2.5 3" fill="none" stroke="#9ab8d0" stroke-width="1.2"/>
 <rect x="9.5" y="31.5" width="7.5" height="5" fill="#fff" stroke="#3c8fd9" stroke-width="1.4"/>
 <path d="M13.2 37v2 M10.5 39.5h5.5" stroke="#3c8fd9" stroke-width="1.2"/>
 <path d="M1.5 46.5h13v13h-13z" fill="none" stroke="#aaa" stroke-width="1" stroke-dasharray="1.5 1.5"/>
 <path d="M6 62l10-10v5l-5 5z" fill="#bbb"/>
 <path d="M4 57l4-4" stroke="#ccc" stroke-width="2"/>
 <circle cx="10" cy="50" r="1.5" fill="none" stroke="#ccc"/>
</svg>
<div class="rsep" style="left:475px;top:99px;height:83px"></div>
<!-- Переходы -->
<svg class="a" style="left:531px;top:101px" width="26" height="32" viewBox="0 0 26 32">
 <rect x="8" y="2" width="16" height="5" fill="#dcdcdc"/>
 <path d="M2.5 5.5h17v21h-17z" fill="#f8f8f8" stroke="#a8a8a8" stroke-width="1" stroke-dasharray="1 1"/>
 <path d="M5 9.5h12 M5 13.5h12 M5 17.5h12 M5 21.5h12" stroke="#b8b8b8" stroke-width="1" stroke-dasharray="1 1"/>
 <path d="M7 25.5h16v4.5h-16z" fill="none" stroke="#dcdcdc" stroke-width="1" stroke-dasharray="1 1"/>
</svg>
<div class="rt" style="left:486px;top:138px;color:#a6a6a6">Перейти к верхнему</div>
<div class="rt" style="left:507px;top:154px;color:#a6a6a6">колонтитулу</div>
<svg class="a" style="left:647px;top:101px" width="26" height="32" viewBox="0 0 26 32">
 <rect x="8" y="2" width="16" height="5" fill="#f2c27c"/>
 <path d="M2.5 5.5h17v21h-17z" fill="#fff" stroke="#5f5b78" stroke-width="1.1"/>
 <path d="M5 9.5h12 M5 13.5h12 M5 17.5h12 M5 21.5h12" stroke="#8a8a8a" stroke-width="1"/>
 <rect x="7" y="25" width="16" height="5" fill="#f2c27c"/>
</svg>
<div class="rt" style="left:604px;top:138px">Перейти к нижнему</div>
<div class="rt" style="left:624px;top:154px">колонтитулу</div>
<div class="rt" style="left:571px;top:174px">Переходы</div>
<div class="rsep" style="left:723px;top:99px;height:83px"></div>
<div class="a" style="left:748px;top:99px;width:32px;height:31px;border:1px solid #b5b5b5;background:#f3f3f3"></div>
<svg class="a" style="left:755px;top:104px" width="18" height="20" viewBox="0 0 18 20">
 <path d="M3.5 2.5h7l3.5 3.5v11h-10.5z M10.5 2.5v3.5h3.5" fill="none" stroke="#5f5b78" stroke-width="1.1"/>
 <circle cx="6.5" cy="9.5" r="1" fill="#5f5b78"/><circle cx="6.5" cy="13" r="1" fill="none" stroke="#5f5b78" stroke-width=".8"/>
 <path d="M8.5 9.5h3 M8.5 13h3" stroke="#5f5b78" stroke-width="1"/>
</svg>
<div class="rt" style="left:733px;top:137px">Параметры</div>
<svg class="a" style="left:761px;top:155px" width="7" height="4"><path d="M0 0h7L3.5 4z" fill="#555"/></svg>
<div class="rsep" style="left:804px;top:99px;height:83px"></div>
<svg class="a" style="left:890px;top:177px" width="13" height="7"><path d="M1 6l5.5-5 5.5 5" fill="none" stroke="#444" stroke-width="1.1"/></svg>

<!--DD-->
<div class="a" style="left:39px;top:166px;width:410px;height:413px;background:#fff;border-left:1px solid #c6c6c6;border-top:1px solid #c6c6c6"></div>
<div class="t" style="left:73.5px;top:175.1px;font-size:12.2px;color:#4d4d4d;transform:scaleX(.945);transform-origin:0 0">(нет)</div>
<div class="t" style="left:73.5px;top:199.0px;font-size:12.2px;color:#4d4d4d;transform:scaleX(.945);transform-origin:0 0">Страница 1</div>
<div class="t" style="left:73.5px;top:223.0px;font-size:12.2px;color:#4d4d4d;transform:scaleX(.945);transform-origin:0 0">Страница  1 из ?</div>
<div class="t" style="left:73.5px;top:247.0px;font-size:12.2px;color:#4d4d4d;transform:scaleX(.945);transform-origin:0 0">Лист1</div>
<div class="t" style="left:73.5px;top:271.0px;font-size:12.2px;color:#4d4d4d;transform:scaleX(.945);transform-origin:0 0"> Секретно; 28.10.2020; Страница 1</div>
<div class="t" style="left:73.5px;top:294.9px;font-size:12.2px;color:#4d4d4d;transform:scaleX(.945);transform-origin:0 0">Диаграмма в диаграмме.xlsx</div>
<div class="t" style="left:73.5px;top:342.9px;font-size:12.2px;color:#4d4d4d;transform:scaleX(.945);transform-origin:0 0">Лист1; Страница 1</div>
<div class="t" style="left:73.5px;top:366.8px;font-size:12.2px;color:#4d4d4d;transform:scaleX(.945);transform-origin:0 0">Лист1;  Секретно; Страница 1</div>
<div class="t" style="left:73.5px;top:390.8px;font-size:12.2px;color:#4d4d4d;transform:scaleX(.945);transform-origin:0 0">Диаграмма в диаграмме.xlsx; Страница 1</div>
<div class="t" style="left:73.5px;top:438.7px;font-size:12.2px;color:#4d4d4d;transform:scaleX(.945);transform-origin:0 0">Страница 1; Лист1</div>
<div class="t" style="left:73.5px;top:462.7px;font-size:12.2px;color:#4d4d4d;transform:scaleX(.945);transform-origin:0 0">Страница 1; Диаграмма в диаграмме.xlsx</div>
<div class="t" style="left:73.5px;top:486.7px;font-size:12.2px;color:#4d4d4d;transform:scaleX(.945);transform-origin:0 0">Страница 1; Диаграмма в диаграмме.xlsx</div>
<div class="t" style="left:73.5px;top:318.9px;font-size:12.2px;color:#4d4d4d;transform:scaleX(.945);transform-origin:0 0">C:\</div>
<div class="a" style="left:90px;top:318.2px;width:56px;height:12px;background:#e6e6e6;border-radius:6px;filter:blur(2px)"></div>
<div class="t" style="left:148px;top:318.9px;font-size:12.2px;color:#4d4d4d;transform:scaleX(.945);transform-origin:0 0">\Documents\Диаграмма в диаграмме.xlsx</div>
<div class="t" style="left:73.5px;top:414.8px;font-size:12.2px;color:#4d4d4d;transform:scaleX(.945);transform-origin:0 0">C:\</div>
<div class="a" style="left:90px;top:414.1px;width:56px;height:12px;background:#e6e6e6;border-radius:6px;filter:blur(2px)"></div>
<div class="t" style="left:148px;top:414.8px;font-size:12.2px;color:#4d4d4d;transform:scaleX(.945);transform-origin:0 0">\Documents\Диаграмма в диаграмме.xlsx; Страница 1</div>
<div class="t" style="left:73.5px;top:510.7px;font-size:12.2px;color:#4d4d4d;transform:scaleX(.945);transform-origin:0 0">Страница 1; C:\</div>
<div class="a" style="left:159px;top:510.0px;width:56px;height:12px;background:#e6e6e6;border-radius:6px;filter:blur(2px)"></div>
<div class="t" style="left:217px;top:510.7px;font-size:12.2px;color:#4d4d4d;transform:scaleX(.945);transform-origin:0 0">\Documents\Диаграмма в диаграмме.xlsx</div>
<div class="a" style="left:72px;top:533.9px;width:87px;height:12px;background:#e6e6e6;border-radius:6px;filter:blur(2px)"></div>
<div class="t" style="left:163.5px;top:534.6px;font-size:12.2px;color:#4d4d4d;transform:scaleX(.945);transform-origin:0 0">Страница 1; 28.10.2020</div>
<div class="t" style="left:73.5px;top:558.6px;font-size:12.2px;color:#4d4d4d;transform:scaleX(.945);transform-origin:0 0">Подготовил:</div>
<div class="a" style="left:145px;top:557.9px;width:83px;height:12px;background:#e6e6e6;border-radius:6px;filter:blur(2px)"></div>
<div class="t" style="left:232px;top:558.6px;font-size:12.2px;color:#4d4d4d;transform:scaleX(.945);transform-origin:0 0">28.10.2020; Страница  1</div>
<div class="a" style="left:53.5px;top:164.5px;width:398.5px;height:418px;border:4.2px solid #ff0000;border-radius:11px;box-shadow:1px 2px 5px rgba(0,0,0,.38), inset 1px 2px 4px 0 rgba(0,0,0,.3), inset 0 0 4px 1px rgba(0,0,0,.28)"></div>
<!--DD_END-->
</body></html>
